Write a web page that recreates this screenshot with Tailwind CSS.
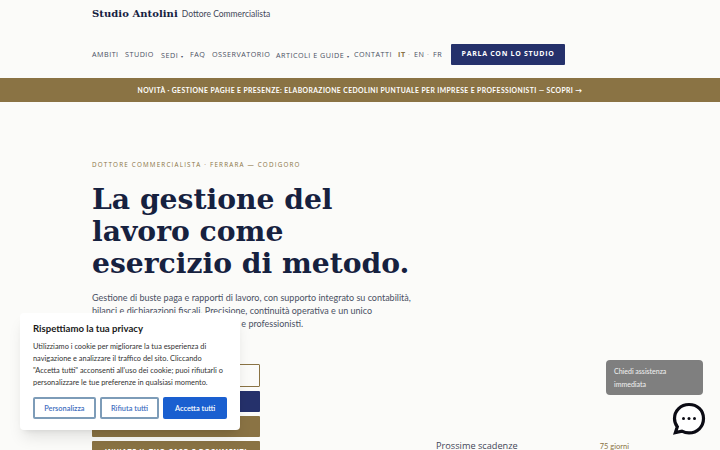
<!DOCTYPE html>
<html lang="it">
<head>
<meta charset="UTF-8">
<title>Studio Antolini</title>
<script src="https://cdn.jsdelivr.net/npm/@tailwindcss/browser@4"></script>
</head>
<body class="bg-[#fbfbf9] h-[450px] overflow-hidden relative font-['Lato',sans-serif]">
  <!-- Header -->
  <header class="h-[78px] pl-[92px]">
    <div class="flex items-baseline gap-[4px] pt-[6px]">
      <span class="font-['DejaVu_Serif',serif] font-bold text-[10px] text-[#16213f] tracking-[0.05px]">Studio Antolini</span>
      <span class="text-[8.5px] text-[#3f4658]">Dottore Commercialista</span>
    </div>
    <nav class="flex items-center mt-[23px] h-[21px] text-[7.2px] tracking-[0.5px] text-[#4a5063] font-['Open_Sans',sans-serif] whitespace-nowrap">
      <a class="w-[33px]">AMBITI</a>
      <a class="w-[36px]">STUDIO</a>
      <a class="w-[29px] mt-[2px]">SEDI <span class="text-[4px]">▾</span></a>
      <a class="w-[22px]">FAQ</a>
      <a class="w-[64px]">OSSERVATORIO</a>
      <a class="w-[78px] mt-[2px]">ARTICOLI E GUIDE <span class="text-[4px]">▾</span></a>
      <a class="w-[44px]">CONTATTI</a>
      <a class="w-[10px] font-bold text-[#8a7344]">IT</a>
      <span class="w-[6px] text-[#9a9a9a]">·</span>
      <a class="w-[13px]">EN</a>
      <span class="w-[6px] text-[#9a9a9a]">·</span>
      <a class="w-[18px]">FR</a>
      <a class="w-[114px] h-[21px] bg-[#25316b] text-white text-[7px] font-bold flex items-center justify-center rounded-[1px] tracking-[0.7px]">PARLA CON LO STUDIO</a>
    </nav>
  </header>

  <!-- Banner -->
  <div class="h-[24px] bg-[#8a7344] flex items-center justify-center text-white text-[6.8px] font-bold tracking-[0.41px] whitespace-nowrap">
    NOVITÀ · GESTIONE PAGHE E PRESENZE: ELABORAZIONE CEDOLINI PUNTUALE PER IMPRESE E PROFESSIONISTI — SCOPRI →
  </div>

  <!-- Hero -->
  <main class="pl-[92px] pt-[58px] flex">
    <div class="w-[320px] shrink-0">
      <p class="text-[6.3px] tracking-[1.18px] text-[#8a7344] font-['Open_Sans',sans-serif] whitespace-nowrap">DOTTORE COMMERCIALISTA · FERRARA — CODIGORO</p>
      <h1 class="mt-[15px] font-['DejaVu_Serif',serif] font-bold text-[28.2px] leading-[32px] text-[#16213f] whitespace-nowrap">La gestione del<br>lavoro come<br>esercizio di metodo.</h1>
      <p class="mt-[11px] text-[9px] leading-[13px] text-[#4a5063] whitespace-nowrap">Gestione di buste paga e rapporti di lavoro, con supporto integrato su contabilità,<br>bilanci e dichiarazioni fiscali. Precisione, continuità operativa e un unico<br>riferimento per la gestione di imprese e professionisti.</p>
      <div class="mt-[34px] w-[168px] flex flex-col gap-[4px] text-[7px] font-bold tracking-[0.6px] font-['Open_Sans',sans-serif] whitespace-nowrap">
        <a class="h-[23px] border border-[#8a7344] text-[#8a7344] flex items-center justify-center rounded-[1px]">RICHIEDI UNA CONSULENZA</a>
        <a class="h-[21px] bg-[#25316b] text-white flex items-center justify-center rounded-[1px]">PARLA CON LO STUDIO</a>
        <a class="h-[21px] bg-[#8a7344] text-white flex items-center justify-center rounded-[1px]">SCOPRI I SERVIZI</a>
        <a class="h-[21px] bg-[#8a7344] text-white flex items-center justify-center rounded-[1px]">INVIATE IL TUO CASO E DOCUMENTI</a>
      </div>
    </div>
    <div class="ml-[24px] pt-[279px] w-[193px] flex justify-between items-baseline">
      <span class="text-[9.2px] text-[#3f4658] font-['Open_Sans',sans-serif]">Prossime scadenze</span>
      <span class="text-[7.5px] text-[#8a7344]">75 giorni</span>
    </div>
  </main>

  <!-- Cookie banner -->
  <div class="absolute left-[20px] top-[313px] w-[220px] h-[117px] bg-white rounded-[4px] shadow-lg px-[13px] pt-[9px]">
    <h2 class="text-[9.6px] font-bold text-[#1a1a1a]">Rispettiamo la tua privacy</h2>
    <p class="mt-[5px] text-[7.4px] leading-[12px] text-[#333] whitespace-nowrap">Utilizziamo i cookie per migliorare la tua esperienza di<br>navigazione e analizzare il traffico del sito. Cliccando<br>"Accetta tutti" acconsenti all'uso dei cookie; puoi rifiutarli o<br>personalizzare le tue preferenze in qualsiasi momento.</p>
    <div class="mt-[8px] flex gap-[4px] text-[7.4px] font-semibold">
      <button class="w-[63px] h-[22px] border-2 border-[#7d9cb8] rounded-[2px] text-[#3f6fc0]">Personalizza</button>
      <button class="w-[60px] h-[22px] border-2 border-[#7d9cb8] rounded-[2px] text-[#3f6fc0]">Rifiuta tutti</button>
      <button class="w-[64px] h-[22px] bg-[#1a5fd0] rounded-[2px] text-white">Accetta tutti</button>
    </div>
  </div>

  <!-- Chat -->
  <div class="absolute left-[606px] top-[360px] w-[97px] h-[35px] bg-[#7f7f7f] rounded-[4px] px-[8px] py-[5px] text-[7px] leading-[12.5px] text-white/90">Chiedi assistenza<br>immediata</div>
  <svg class="absolute left-[672px] top-[402px]" width="34" height="34" viewBox="0 0 34 34">
    <path d="M17 2.500C8.700 2.500 2.500 8.600 2.500 16.500c0 3.200 1 6 2.800 8.300L3.400 30.600l6.500-1.500c2.100 1.100 4.500 1.800 7.100 1.800 8.300 0 14.500-6.200 14.500-14.400S25.300 2.500 17 2.500z" fill="#fff" stroke="#0b0b14" stroke-width="3.200"/>
    <circle cx="11.500" cy="16.500" r="1.500" fill="#0b0b14"/><circle cx="17" cy="16.500" r="1.500" fill="#0b0b14"/><circle cx="22.500" cy="16.500" r="1.500" fill="#0b0b14"/>
  </svg>
</body>
</html>
